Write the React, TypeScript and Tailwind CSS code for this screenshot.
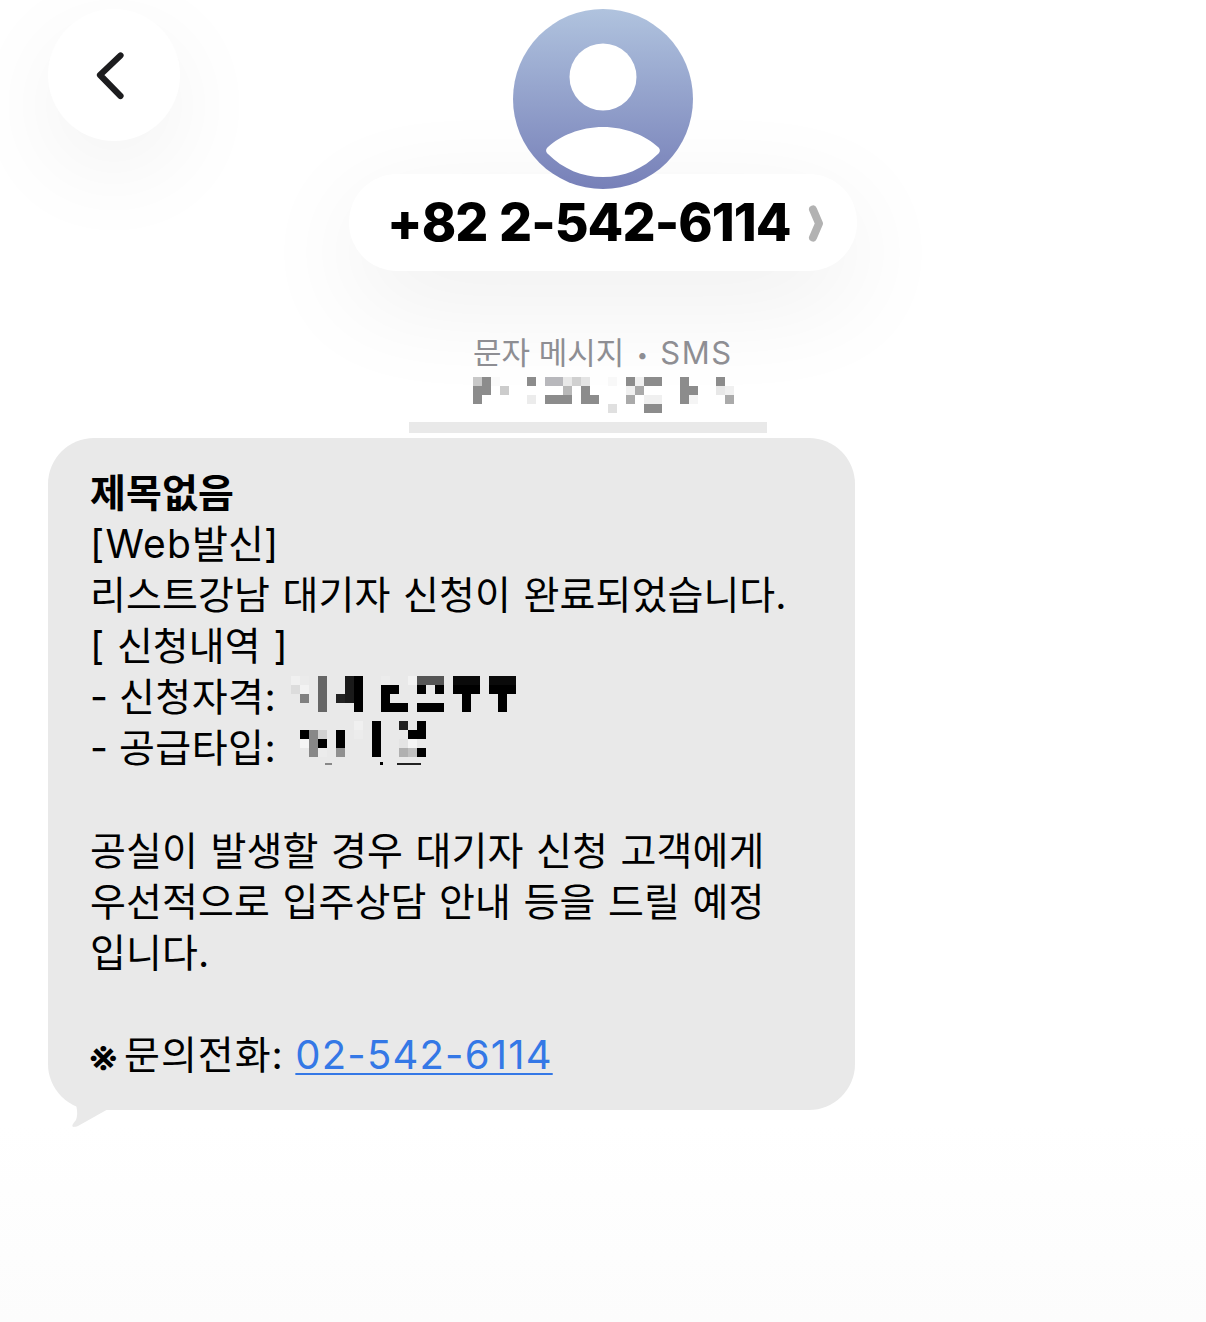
import React from "react";

type Cell = [number, number, string, number?, number?];

function Pixels({ cells, cols, rows, size = 9, className = "" }: { cells: Cell[]; cols: number; rows: number; size?: number; className?: string }) {
  return (
    <svg width={cols * size} height={rows * size} viewBox={`0 0 ${cols * size} ${rows * size}`} shapeRendering="crispEdges" className={className}>
      {cells.map(([c, r, f, w = 1, h = 1], i) => (
        <rect key={i} x={c * size} y={r * size} width={w * size} height={h * size} fill={f} />
      ))}
    </svg>
  );
}

const header: Cell[] = [
  [0, 0, "#c8c8c8"], [1, 0, "#8c8c8c"], [2, 0, "#fafafa"], [6, 0, "#8c8c8c"], [8, 0, "#b8b8bc", 2], [10, 0, "#e8e8e8"], [11, 0, "#d0d0d0"], [12, 0, "#e4e4e4"], [15, 0, "#f8f8f8"], [17, 0, "#8c8c8c"], [18, 0, "#f0f0f0"], [19, 0, "#8c8c8c", 2], [23, 0, "#8c8c8c", 1, 3], [27, 0, "#8c8c8c"],
  [0, 1, "#8c8c8c", 1, 2], [1, 1, "#8c8c8c"], [3, 1, "#cccccc"], [10, 1, "#b8b8b8"], [12, 1, "#8c8c8c", 1, 2], [18, 1, "#aaaaaa"], [17, 1, "#f0f0f0"], [24, 1, "#8c8c8c"], [27, 1, "#e8e8e8"], [28, 1, "#f0f0f0"],
  [6, 2, "#ececec"], [8, 2, "#8c8c8c", 3], [13, 2, "#8c8c8c"], [17, 2, "#aaaaaa"], [19, 2, "#f0f0f0", 2], [24, 2, "#f5f5f5"], [28, 2, "#aaaaaa"],
  [15, 3, "#e0e0e0"], [19, 3, "#8c8c8c", 2],
];

const qual: Cell[] = [
  [0, 0, "#f0f0f0"], [1, 0, "#ebebeb"], [3, 0, "#666666", 1, 4], [6, 0, "#1a1a1a", 1, 3], [7, 0, "#000000", 1, 4], [10, 0, "#ececec"], [13, 0, "#f2f2f2"], [14, 0, "#555555", 3], [18, 0, "#0a0a0a", 3], [22, 0, "#0a0a0a", 3],
  [0, 1, "#dcdcdc"], [1, 1, "#f2f2f2"], [10, 1, "#000000", 2], [14, 1, "#000000"], [16, 1, "#000000"], [18, 1, "#000000", 3], [22, 1, "#000000", 3],
  [1, 2, "#808080"], [5, 2, "#222222"], [10, 2, "#000000"], [19, 2, "#000000", 1, 2], [23, 2, "#000000", 1, 2],
  [10, 3, "#000000", 3], [14, 3, "#000000", 3],
];

const supply: Cell[] = [
  [9, 0, "#000000", 1, 4], [12, 0, "#222222"], [14, 0, "#000000"], [7, 0, "#f0f0f0"],
  [1, 1, "#000000"], [2, 1, "#888888", 1, 3], [3, 1, "#d0d0d0"], [5, 1, "#000000", 1, 2], [13, 1, "#000000", 2], [7, 1, "#ececec"],
  [1, 2, "#f5f5f5"], [3, 2, "#000000"], [12, 2, "#e4e4e4"], [13, 2, "#f5f5f5"],
  [3, 3, "#ececec"], [5, 3, "#909090"], [12, 3, "#b0b0b0"], [13, 3, "#c0c0c0"], [14, 3, "#000000"],
  [3.75, 4.67, "#888888", 0.8, 0.2], [9.9, 4.55, "#000000", 0.35, 0.35], [11.8, 4.67, "#222222", 2.6, 0.2],
];

function Line({ children }: { children?: React.ReactNode }) {
  return <div className="h-[51.1px] leading-[51.1px] whitespace-nowrap">{children}</div>;
}

export default function App() {
  return (
    <div
      className="w-[1206px] h-[1322px] overflow-hidden bg-gradient-to-b from-white from-85% to-[#fcfcfc] text-black"
      style={{ fontFamily: 'Inter, "Noto Sans CJK KR", sans-serif' }}
    >
      <div className="flex items-start pt-[9px] pl-[48px]">
        <div className="w-[132px] h-[132px] rounded-full bg-white shadow-[0_30px_100px_rgba(0,0,0,0.06)] flex items-center justify-center shrink-0">
          <svg width="132" height="132" viewBox="0 0 132 132">
            <path d="M72.5 46.5 L52 66 L72.5 87" fill="none" stroke="#1c1c1e" strokeWidth="6.2" strokeLinecap="round" strokeLinejoin="round" />
          </svg>
        </div>
        <div className="ml-[169px] w-[508px] flex flex-col items-center shrink-0">
          <div className="relative z-10 w-[180px] h-[180px] rounded-full bg-gradient-to-b from-[#b0c3de] to-[#7780b8]">
            <svg width="180" height="180" viewBox="0 0 180 180">
              <circle cx="90" cy="68" r="33.5" fill="#fff" />
              <path d="M90 118 C113 118 133 127 145 138 C147.500 140 147.500 143 145 145 C130 160 111 168 90 168 C69 168 50 160 35 145 C32.500 143 32.500 140 35 138 C47 127 67 118 90 118 Z" fill="#fff" />
            </svg>
          </div>
          <div className="-mt-[15px] w-[508px] h-[97px] rounded-[48px] bg-white shadow-[0_30px_110px_rgba(0,0,0,0.07)] flex items-center pl-[38px]">
            <span className="w-[403px] text-[52px] font-extrabold leading-none tracking-[-0.95px] [word-spacing:1px] text-black whitespace-nowrap">
              +82 2-542-6114
            </span>
            <svg width="18" height="38" viewBox="0 0 18 38" className="ml-[17px]">
              <path d="M6 5.5 L12 19.500 L6 33.500" fill="none" stroke="#b2b2b2" strokeWidth="8" strokeLinecap="round" strokeLinejoin="round" />
            </svg>
          </div>
        </div>
      </div>

      <div className="mt-[62px] ml-[473px] w-[300px]">
        <div className="h-[40px] overflow-hidden text-[31px] leading-[40px] text-[#8e8e93] whitespace-nowrap">
          문자 메시지<span className="inline-block w-[36px] text-center text-[20px] leading-none align-[2px]">•</span><span className="tracking-[1.5px]">SMS</span>
        </div>
        <Pixels cells={header} cols={30} rows={4} className="block mt-[4px]" />
      </div>
      <div className="mt-[9px] ml-[409px] w-[358px] h-[11px] bg-[#e9e9e9]" />

      <div className="relative mt-[5px] ml-[48px] w-[807px] h-[672px]">
        <svg width="60" height="40" viewBox="0 0 60 40" className="absolute left-[20px] top-[650px]">
          <path d="M4 4 C8 16 11 24 8 32 C2 39 4 40 10 38 L42 20 L42 4 Z" fill="#e9e9e9" />
        </svg>
        <div className="relative h-full rounded-[46px] bg-[#e9e9e9] pl-[42px] pt-[29px] text-[39px] tracking-[0.1px] [word-spacing:1.5px]">
          <Line><span className="font-bold">제목없음</span></Line>
          <Line><span className="tracking-[1.2px]">[Web</span>발신]</Line>
          <Line>리스트강남 대기자 신청이 완료되었습니다.</Line>
          <Line>[ 신청내역 ]</Line>
          <div className="relative">
            <Line><span className="tracking-[0.5px] [word-spacing:-1px]">- 신청자격:</span></Line>
            <Pixels cells={qual} cols={26} rows={4} className="absolute left-[201px] top-[5px]" />
          </div>
          <div className="relative">
            <Line><span className="tracking-[0.5px] [word-spacing:-1px]">- 공급타입:</span></Line>
            <Pixels cells={supply} cols={16} rows={5} className="absolute left-[201px] top-[-1px]" />
          </div>
          <Line />
          <Line>공실이 발생할 경우 대기자 신청 고객에게</Line>
          <Line>우선적으로 입주상담 안내 등을 드릴 예정</Line>
          <Line>입니다.</Line>
          <Line />
          <Line>
            <span className="inline-block w-[35px] -ml-[2px] mr-[1px] text-[44px] font-medium leading-none align-[-4px]">※</span><span className="tracking-[1px]">문의전화:</span> <span className="-ml-[1px] text-[40px] tracking-[1.2px] text-[#3478e6] underline decoration-2 underline-offset-[4px]">02-542-6114</span>
          </Line>
        </div>
      </div>
    </div>
  );
}
